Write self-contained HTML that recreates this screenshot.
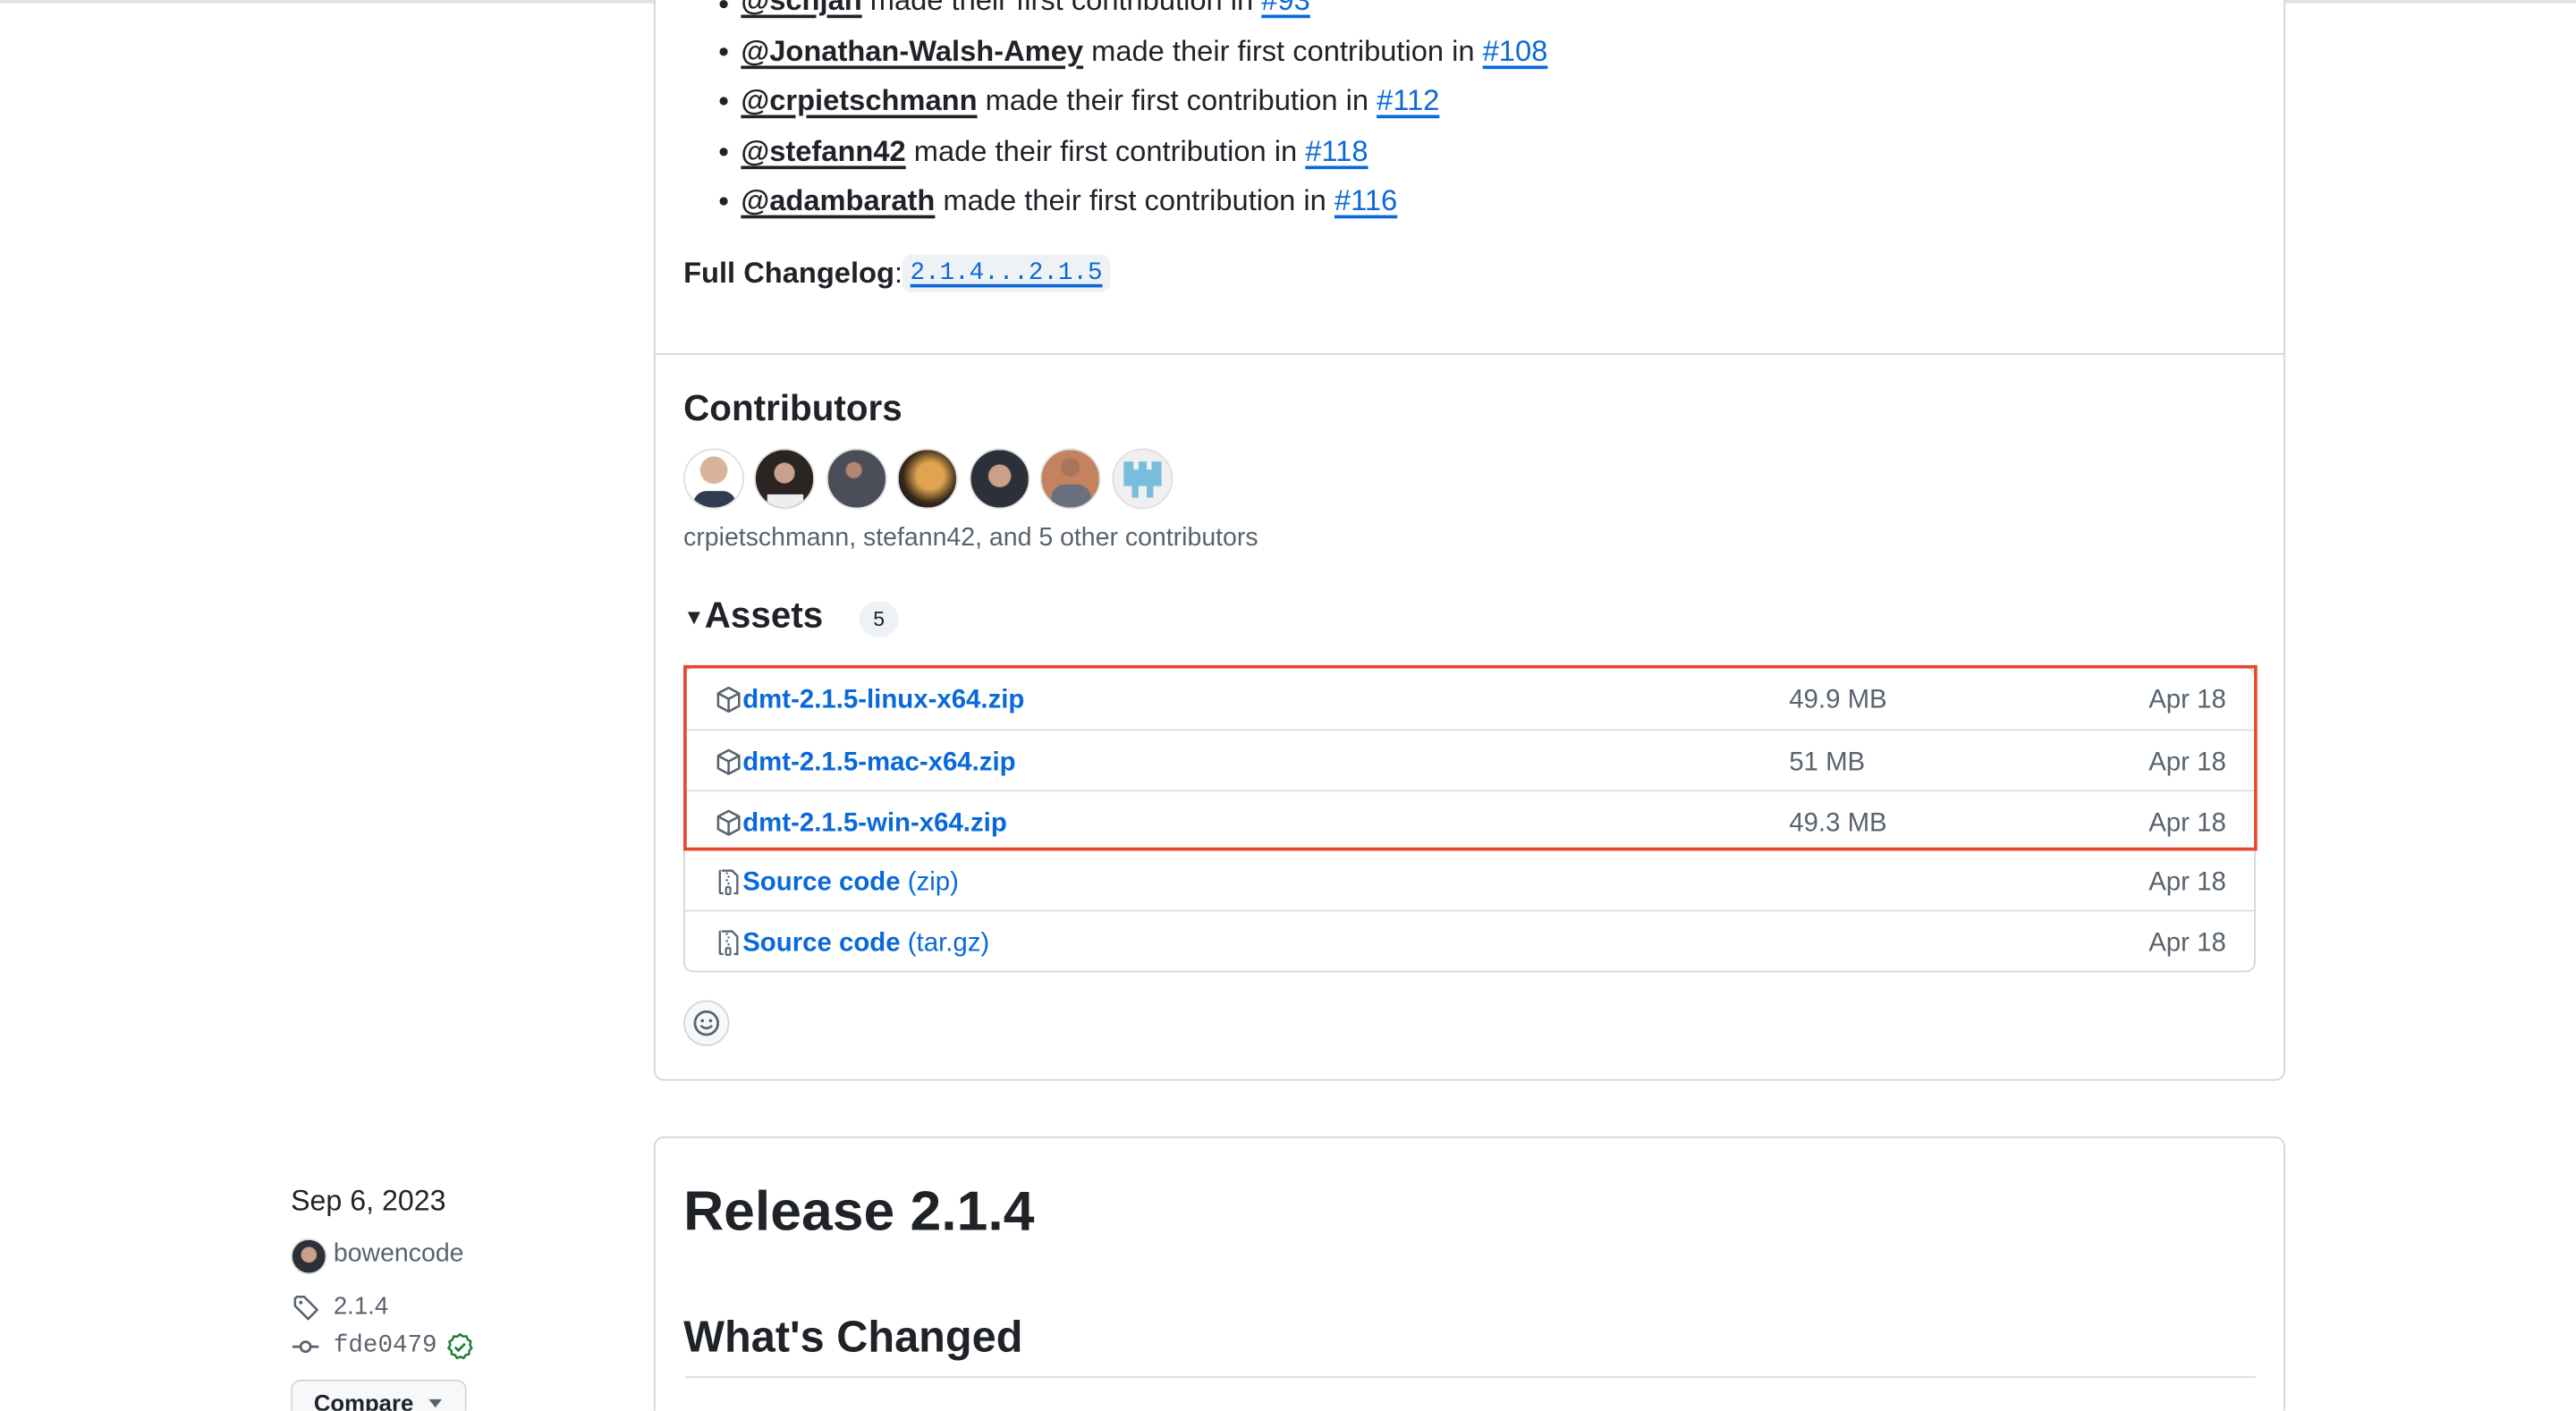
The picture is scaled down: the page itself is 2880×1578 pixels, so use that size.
<!DOCTYPE html>
<html><head><meta charset="utf-8">
<style>
html,body{margin:0;padding:0;background:#fff;overflow:hidden;width:2880px;height:1578px}
#w{position:absolute;left:0;top:0;width:1568px;height:859px;overflow:hidden;transform:scale(1.83674);transform-origin:0 0;font-family:"Liberation Sans",sans-serif;color:#1f2328}
.a{position:absolute;white-space:nowrap}
.card{position:absolute;border:1px solid #d0d7de;border-radius:6px;background:#fff}
.u{text-decoration:underline;text-decoration-thickness:1.5px;text-underline-offset:3px}
.b{color:#1f2328;font-weight:700}
.l{color:#0969da}
.li{font-size:17.8px;line-height:24px}
.dot{position:absolute;width:5px;height:5px;border-radius:50%;background:#1f2328}
.av{position:absolute;width:35px;height:35px;border-radius:50%;border:1px solid #e0e0e0;top:273px;overflow:hidden}
.row{position:absolute;left:0;right:0;height:36px;border-top:1px solid #d8dee4}
.nm{position:absolute;left:35px;top:2px;line-height:36px;font-size:16px;color:#0969da;font-weight:700}
.sz{position:absolute;left:672px;top:2px;line-height:36px;font-size:16px;color:#59636e}
.dt{position:absolute;right:17px;top:2px;line-height:36px;font-size:16px;color:#59636e}
.ic{position:absolute;left:18px;top:10px}
</style></head><body><div id="w">
<div style="position:absolute;left:0;top:0;width:1568px;height:1.5px;background:#e2e2e2"></div>

<div class="card" style="left:398px;top:-20px;width:991px;height:676px">
  <div style="position:absolute;left:0;right:0;top:234px;border-top:1px solid #d0d7de"></div>
</div>

<div class="dot" style="left:438px;top:0px"></div>
<div class="a li" style="left:451px;top:-12px"><span class="b u">@schjan</span> made their first contribution in <span class="l u">#93</span></div>
<div class="dot" style="left:438px;top:29px"></div>
<div class="a li" style="left:451px;top:19px"><span class="b u">@Jonathan-Walsh-Amey</span> made their first contribution in <span class="l u">#108</span></div>
<div class="dot" style="left:438px;top:59px"></div>
<div class="a li" style="left:451px;top:49px"><span class="b u">@crpietschmann</span> made their first contribution in <span class="l u">#112</span></div>
<div class="dot" style="left:438px;top:90px"></div>
<div class="a li" style="left:451px;top:80px"><span class="b u">@stefann42</span> made their first contribution in <span class="l u">#118</span></div>
<div class="dot" style="left:438px;top:120px"></div>
<div class="a li" style="left:451px;top:110px"><span class="b u">@adambarath</span> made their first contribution in <span class="l u">#116</span></div>

<div class="a li" style="left:416px;top:154px"><span class="b">Full Changelog</span>: </div>
<div class="a" style="left:549px;top:155px;width:127px;height:23px;background:#eff2f5;border-radius:6px"></div>
<div class="a l u" style="left:554px;top:155px;font-family:'Liberation Mono',monospace;font-size:15px;line-height:23px">2.1.4...2.1.5</div>

<div class="a" style="left:416px;top:235px;font-size:22px;font-weight:700;line-height:28px">Contributors</div>
<div class="av" style="left:416px;background:radial-gradient(circle at 50% 35%,#d9b39b 0 28%,#fff 30%);"><div style="position:absolute;bottom:0;left:5px;width:26px;height:10px;background:#2f3c52;border-radius:8px 8px 0 0"></div></div>
<div class="av" style="left:459px;background:radial-gradient(circle at 50% 40%,#c9a08a 0 22%,#2a2422 24%);"><div style="position:absolute;bottom:0;left:7px;width:22px;height:8px;background:#eee"></div></div>
<div class="av" style="left:503px;background:radial-gradient(circle at 45% 35%,#b38670 0 15%,#4a4e58 18%);"></div>
<div class="av" style="left:546px;background:radial-gradient(circle at 55% 45%,#e0a450 0 30%,#3a2a18 60%,#101820 80%);"></div>
<div class="av" style="left:590px;background:radial-gradient(circle at 50% 45%,#caa088 0 25%,#2c3038 28%);"></div>
<div class="av" style="left:633px;background:radial-gradient(circle at 50% 30%,#a8765a 0 18%,#c4825e 20%);"><div style="position:absolute;bottom:0;left:6px;width:24px;height:14px;background:#6a7080;border-radius:8px 8px 0 0"></div></div>
<div class="av" style="left:677px;background:#f0f0f0"><svg width="35" height="35" viewBox="0 0 35 35"><path d="M6 7h6v5h3V7h5v5h3V7h6v15h-5v7h-4v-7h-5v7H11v-7H6z" fill="#78bedc"/></svg></div>
<div class="a" style="left:416px;top:318px;font-size:15.5px;line-height:20px;color:#59636e">crpietschmann, stefann42, and 5 other contributors</div>

<div class="a" style="left:416px;top:361px;font-size:22px;font-weight:700;line-height:28px"><span style="font-size:13px;vertical-align:2px">▼</span>Assets</div>
<div class="a" style="left:523px;top:366px;width:24px;height:22px;border-radius:11px;background:#eff2f5;font-size:12.5px;line-height:22px;text-align:center">5</div>

<div class="a" style="left:416px;top:406px;width:955px;height:184px;border:1px solid #d0d7de;border-radius:6px">
  <div class="row" style="top:0;border-top:none">
    <svg class="ic" width="17" height="18" viewBox="0 0 16 16"><path d="M8 1.2l6 3.2v7.2L8 14.8 2 11.6V4.4z M2 4.4L8 7.6l6-3.2 M8 7.6v7.2" fill="none" stroke="#59636e" stroke-width="1.3" stroke-linejoin="round"/></svg>
    <div class="nm">dmt-2.1.5-linux-x64.zip</div><div class="sz">49.9 MB</div><div class="dt">Apr 18</div></div>
  <div class="row" style="top:37px">
    <svg class="ic" width="17" height="18" viewBox="0 0 16 16"><path d="M8 1.2l6 3.2v7.2L8 14.8 2 11.6V4.4z M2 4.4L8 7.6l6-3.2 M8 7.6v7.2" fill="none" stroke="#59636e" stroke-width="1.3" stroke-linejoin="round"/></svg>
    <div class="nm">dmt-2.1.5-mac-x64.zip</div><div class="sz">51 MB</div><div class="dt">Apr 18</div></div>
  <div class="row" style="top:74px">
    <svg class="ic" width="17" height="18" viewBox="0 0 16 16"><path d="M8 1.2l6 3.2v7.2L8 14.8 2 11.6V4.4z M2 4.4L8 7.6l6-3.2 M8 7.6v7.2" fill="none" stroke="#59636e" stroke-width="1.3" stroke-linejoin="round"/></svg>
    <div class="nm">dmt-2.1.5-win-x64.zip</div><div class="dt">Apr 18</div><div class="sz">49.3 MB</div></div>
  <div class="row" style="top:110px">
    <svg class="ic" width="17" height="18" viewBox="0 0 16 16"><path d="M4 1.5h6l3 3v10H11 M5 14.5H3.5a.5.5 0 0 1-.5-.5V2a.5.5 0 0 1 .5-.5 M7 2.5v1 M8 4.5v1 M7 6.5v1 M8 8.5v1" fill="none" stroke="#59636e" stroke-width="1.2"/><rect x="6.5" y="11" width="2.5" height="4" rx=".6" fill="none" stroke="#59636e" stroke-width="1.1"/></svg>
    <div class="nm">Source code <span style="font-weight:400">(zip)</span></div><div class="dt">Apr 18</div></div>
  <div class="row" style="top:147px">
    <svg class="ic" width="17" height="18" viewBox="0 0 16 16"><path d="M4 1.5h6l3 3v10H11 M5 14.5H3.5a.5.5 0 0 1-.5-.5V2a.5.5 0 0 1 .5-.5 M7 2.5v1 M8 4.5v1 M7 6.5v1 M8 8.5v1" fill="none" stroke="#59636e" stroke-width="1.2"/><rect x="6.5" y="11" width="2.5" height="4" rx=".6" fill="none" stroke="#59636e" stroke-width="1.1"/></svg>
    <div class="nm">Source code <span style="font-weight:400">(tar.gz)</span></div><div class="dt">Apr 18</div></div>
</div>
<div class="a" style="left:416px;top:405px;width:954px;height:109px;border:2px solid #e8452c"></div>

<div class="a" style="left:416px;top:609px;width:26px;height:26px;border-radius:50%;background:#f6f8fa;border:1px solid #d0d7de">
<svg width="26" height="26" viewBox="0 0 26 26" style="position:absolute;left:0;top:0"><circle cx="13" cy="13" r="7" fill="none" stroke="#59636e" stroke-width="1.5"/><circle cx="10.5" cy="11.5" r="1" fill="#59636e"/><circle cx="15.5" cy="11.5" r="1" fill="#59636e"/><path d="M10 14.8q3 2.5 6 0" fill="none" stroke="#59636e" stroke-width="1.4" stroke-linecap="round"/></svg></div>

<div class="card" style="left:398px;top:692px;width:991px;height:200px">
  <div style="position:absolute;left:18px;right:17px;top:145px;border-top:1px solid #d8dee4"></div>
</div>
<div class="a" style="left:416px;top:717px;font-size:34px;font-weight:700;line-height:42px">Release 2.1.4</div>
<div class="a" style="left:416px;top:798px;font-size:26.5px;font-weight:700;line-height:32px">What's Changed</div>

<div class="a" style="left:177px;top:720px;font-size:17.5px;line-height:22px">Sep 6, 2023</div>
<div class="a" style="left:177px;top:754px;width:20px;height:20px;border-radius:50%;background:radial-gradient(circle at 50% 45%,#c9a08a 0 30%,#2c3038 34%);border:1px solid #ddd"></div>
<div class="a" style="left:203px;top:754px;font-size:15.5px;line-height:20px;color:#59636e">bowencode</div>
<svg class="a" style="left:178px;top:788px" width="17" height="17" viewBox="0 0 16 16"><path d="M1.5 2.5v4.2l7.5 7.5 5.2-5.2-7.5-7.5H2.5z" fill="none" stroke="#59636e" stroke-width="1.3" stroke-linejoin="round"/><circle cx="4.8" cy="4.8" r="1" fill="#59636e"/></svg>
<div class="a" style="left:203px;top:786px;font-size:15px;line-height:20px;color:#59636e">2.1.4</div>
<svg class="a" style="left:177px;top:812px" width="18" height="16" viewBox="0 0 18 16"><circle cx="9" cy="8" r="3" fill="none" stroke="#59636e" stroke-width="1.5"/><path d="M1 8h5M12 8h5" stroke="#59636e" stroke-width="1.5"/></svg>
<div class="a" style="left:203px;top:810px;font-size:15px;line-height:20px;color:#59636e;font-family:'Liberation Mono',monospace">fde0479</div>
<svg class="a" style="left:271px;top:811px" width="18" height="18" viewBox="0 0 16 16"><path d="M8 1.3l1.6 1.1 1.9-.1.7 1.8 1.6 1-.4 1.9.9 1.7-1.3 1.4-.1 1.9-1.8.5-1.1 1.6-1.8-.6-1.8.6-1.1-1.6-1.8-.5-.1-1.9L1.8 8.8l.9-1.7-.4-1.9 1.6-1 .7-1.8 1.9.1z" fill="none" stroke="#1a7f37" stroke-width="1.2"/><path d="M5.3 8.2l1.8 1.8 3.6-3.6" fill="none" stroke="#1a7f37" stroke-width="1.3"/></svg>
<div class="a" style="left:177px;top:840px;width:105px;height:34px;border:1px solid #d0d7de;border-radius:6px;background:#f6f8fa"></div>
<div class="a" style="left:191px;top:845px;font-size:14px;line-height:18px;font-weight:700">Compare</div>
<div class="a" style="left:261px;top:852px;width:0;height:0;border-left:4px solid transparent;border-right:4px solid transparent;border-top:5px solid #59636e"></div>
</div></body></html>
